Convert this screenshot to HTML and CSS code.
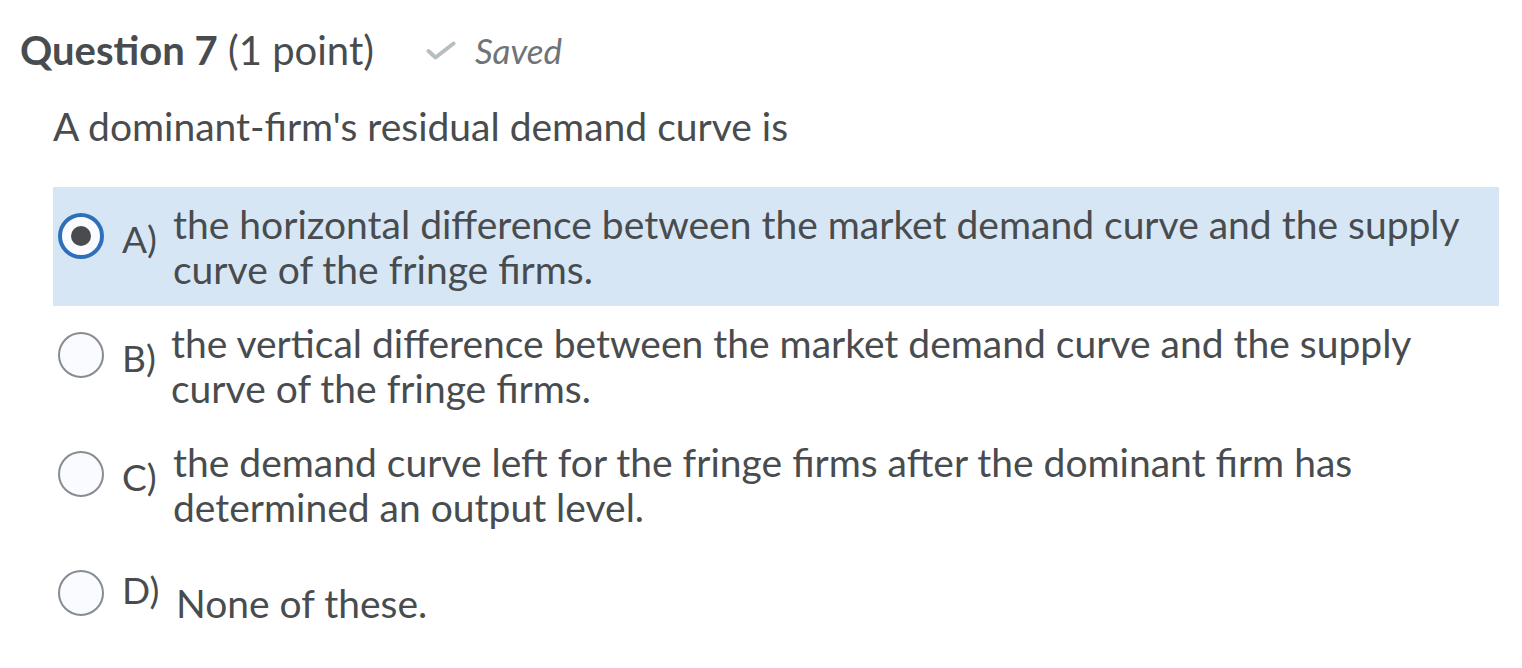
FILE: index.html
```html
<!DOCTYPE html>
<html lang="en">
<head>
<meta charset="utf-8">
<title>Question 7</title>
<link rel="stylesheet" href="styles.css">
</head>
<body>
<div class="page">
  <div class="q-header">
    <h2 class="q-title"><strong>Question 7</strong> <span class="points">(1 point)</span></h2>
    <span class="saved">
      <svg class="check" width="30" height="20" viewBox="0 0 30 20"><path d="M2.5 10 L9.5 16.5 L27.5 2.5" fill="none" stroke="#b7bec2" stroke-width="4" stroke-linecap="round" stroke-linejoin="round"/></svg>
      <em>Saved</em>
    </span>
  </div>
  <p class="q-text">A dominant-firm's residual demand curve is</p>
  <div class="options">
    <div class="option selected">
      <span class="radio checked"></span>
      <span class="label">A)</span>
      <span class="answer">the horizontal difference between the market demand curve and the supply<br>curve of the fringe firms.</span>
    </div>
    <div class="option">
      <span class="radio"></span>
      <span class="label">B)</span>
      <span class="answer b">the vertical difference between the market demand curve and the supply<br>curve of the fringe firms.</span>
    </div>
    <div class="option">
      <span class="radio"></span>
      <span class="label">C)</span>
      <span class="answer">the demand curve left for the fringe firms after the dominant firm has<br>determined an output level.</span>
    </div>
    <div class="option last">
      <span class="radio"></span>
      <span class="label d">D)</span>
      <span class="answer d">None of these.</span>
    </div>
  </div>
</div>
</body>
</html>
```

FILE: styles.css
```css
html, body {
  margin: 0;
  padding: 0;
  background: #ffffff;
}
body {
  font-family: Lato, "Open Sans", sans-serif;
  color: #494c4e;
}
.page {
  padding: 24px 0 0 20px;
}
.q-header {
  display: flex;
  align-items: center;
  height: 52px;
}
.q-title {
  margin: 0;
  font-size: 40px;
  font-weight: 400;
  line-height: 52px;
  color: #494c4e;
}
.q-title strong {
  font-weight: 700;
}
.saved {
  display: flex;
  align-items: center;
  gap: 19px;
  margin-left: 52px;
  font-size: 35px;
  color: #6e7477;
}
.check {
  margin-top: 2px;
}
.saved em {
  font-style: italic;
}
.q-text {
  margin: 28px 0 0 33px;
  font-size: 39px;
  line-height: 45px;
}
.options {
  margin: 38px 0 0 33px;
  width: 1446px;
}
.option {
  display: flex;
  align-items: flex-start;
  height: 119px;
  box-sizing: border-box;
  padding: 0 0 0 5px;
}
.option.selected {
  background: #d7e6f5;
}
.radio {
  flex: none;
  width: 46px;
  height: 46px;
  border: 2px solid #878c90;
  border-radius: 50%;
  background: #f9fbff;
  box-sizing: border-box;
  position: relative;
  margin-top: 26px;
}
.radio.checked {
  border: 4px solid #2d6fba;
  background: #f9fbff;
}
.radio.checked::after {
  content: "";
  position: absolute;
  left: 50%;
  top: 50%;
  width: 20px;
  height: 20px;
  margin: -10px 0 0 -10px;
  border-radius: 50%;
  background: #494c4e;
}
.label {
  flex: none;
  width: 51px;
  margin-left: 18px;
  font-size: 37px;
  line-height: 40px;
  margin-top: 32px;
}
.label.d {
  margin-top: 26px;
}
.answer {
  font-size: 39px;
  line-height: 45px;
  margin-top: 15px;
}
.answer.b {
  margin-left: -2px;
}
.answer.d {
  margin-left: 3px;
  margin-top: 37px;
}
```
